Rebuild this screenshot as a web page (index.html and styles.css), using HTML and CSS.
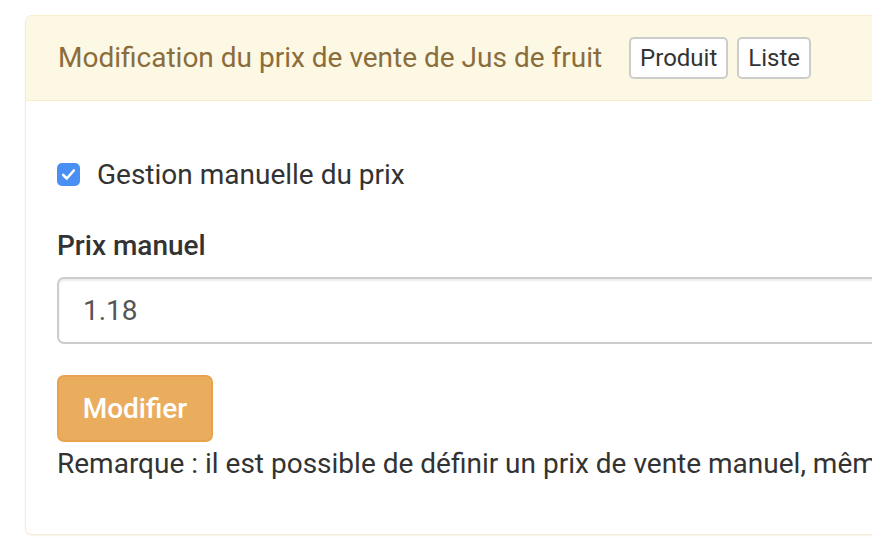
FILE: index.html
```html
<!DOCTYPE html>
<html lang="fr">
<head>
<meta charset="utf-8">
<link rel="stylesheet" href="styles.css">
</head>
<body>
<div class="panel">
  <div class="panel-heading">
    <h3 class="panel-title">Modification du prix de vente de Jus de fruit</h3>
    <a class="btn-xs">Produit</a>
    <a class="btn-xs">Liste</a>
  </div>
  <div class="panel-body">
    <label class="check-row">
      <span class="checkbox">
        <svg width="15" height="13" viewBox="0 0 15 13"><path d="M2.2 7 L5.8 10.5 L12.8 2.5" fill="none" stroke="#fff" stroke-width="2.6" stroke-linecap="round" stroke-linejoin="round"/></svg>
      </span>
      <span>Gestion manuelle du prix</span>
    </label>
    <div class="field-label">Prix manuel</div>
    <div class="input">1.18</div>
    <button class="btn-warning">Modifier</button>
    <p class="remark">Remarque : il est possible de définir un prix de vente manuel, même si le prix est calculé automatiquement.</p>
  </div>
</div>
</body>
</html>
```
FILE: styles.css
```css
html, body {
  margin: 0;
  padding: 0;
  background: #fff;
}
body {
  font-family: Roboto, "Liberation Sans", sans-serif;
  color: #333;
  overflow: hidden;
  width: 872px;
  height: 540px;
}
.panel {
  margin: 15px 0 0 25px;
  width: 1000px;
  border: 1px solid #faebcc;
  border-radius: 7px;
  box-shadow: 0 1px 2px rgba(0,0,0,0.05);
  overflow: hidden;
}
.panel-heading {
  background: #fcf8e3;
  border-bottom: 1px solid #faebcc;
  height: 85px;
  display: flex;
  align-items: center;
  padding: 0 0 0 32px;
  box-sizing: border-box;
  gap: 9px;
}
.panel-title {
  margin: 0 18px 0 0;
  font-size: 28px;
  font-weight: 400;
  color: #8a6d3b;
  line-height: 1;
}
.btn-xs {
  display: inline-block;
  background: #fff;
  border: 2px solid #ccc;
  border-radius: 5px;
  color: #333;
  font-size: 24px;
  line-height: 38px;
  padding: 0 9px;
  height: 42px;
  box-sizing: border-box;
}
.panel-body {
  padding: 61px 30px 50px 31px;
}
.check-row {
  display: flex;
  align-items: center;
  font-size: 28px;
  height: 24px;
  gap: 17px;
}
.checkbox {
  width: 23px;
  height: 23px;
  border-radius: 5px;
  background: #4a8ff4;
  display: flex;
  align-items: center;
  justify-content: center;
  flex: none;
}
.field-label {
  margin-top: 40px;
  font-size: 28px;
  font-weight: 500;
  line-height: 40px;
}
.input {
  margin-top: 11px;
  height: 67px;
  box-sizing: border-box;
  border: 2px solid #ccc;
  border-radius: 7px;
  box-shadow: inset 0 2px 2px rgba(0,0,0,0.075);
  font-size: 28px;
  line-height: 63px;
  padding: 0 24px;
  color: #555;
}
.btn-warning {
  display: block;
  margin-top: 31px;
  width: 156px;
  height: 67px;
  background: #eaad5e;
  border: 2px solid #e6a24e;
  border-radius: 7px;
  color: #fff;
  font-family: Roboto, "Liberation Sans", sans-serif;
  font-size: 28px;
  font-weight: 500;
  padding: 0;
}
.remark {
  margin: 2px 0 0;
  font-size: 28px;
  line-height: 40px;
  white-space: nowrap;
}
```
